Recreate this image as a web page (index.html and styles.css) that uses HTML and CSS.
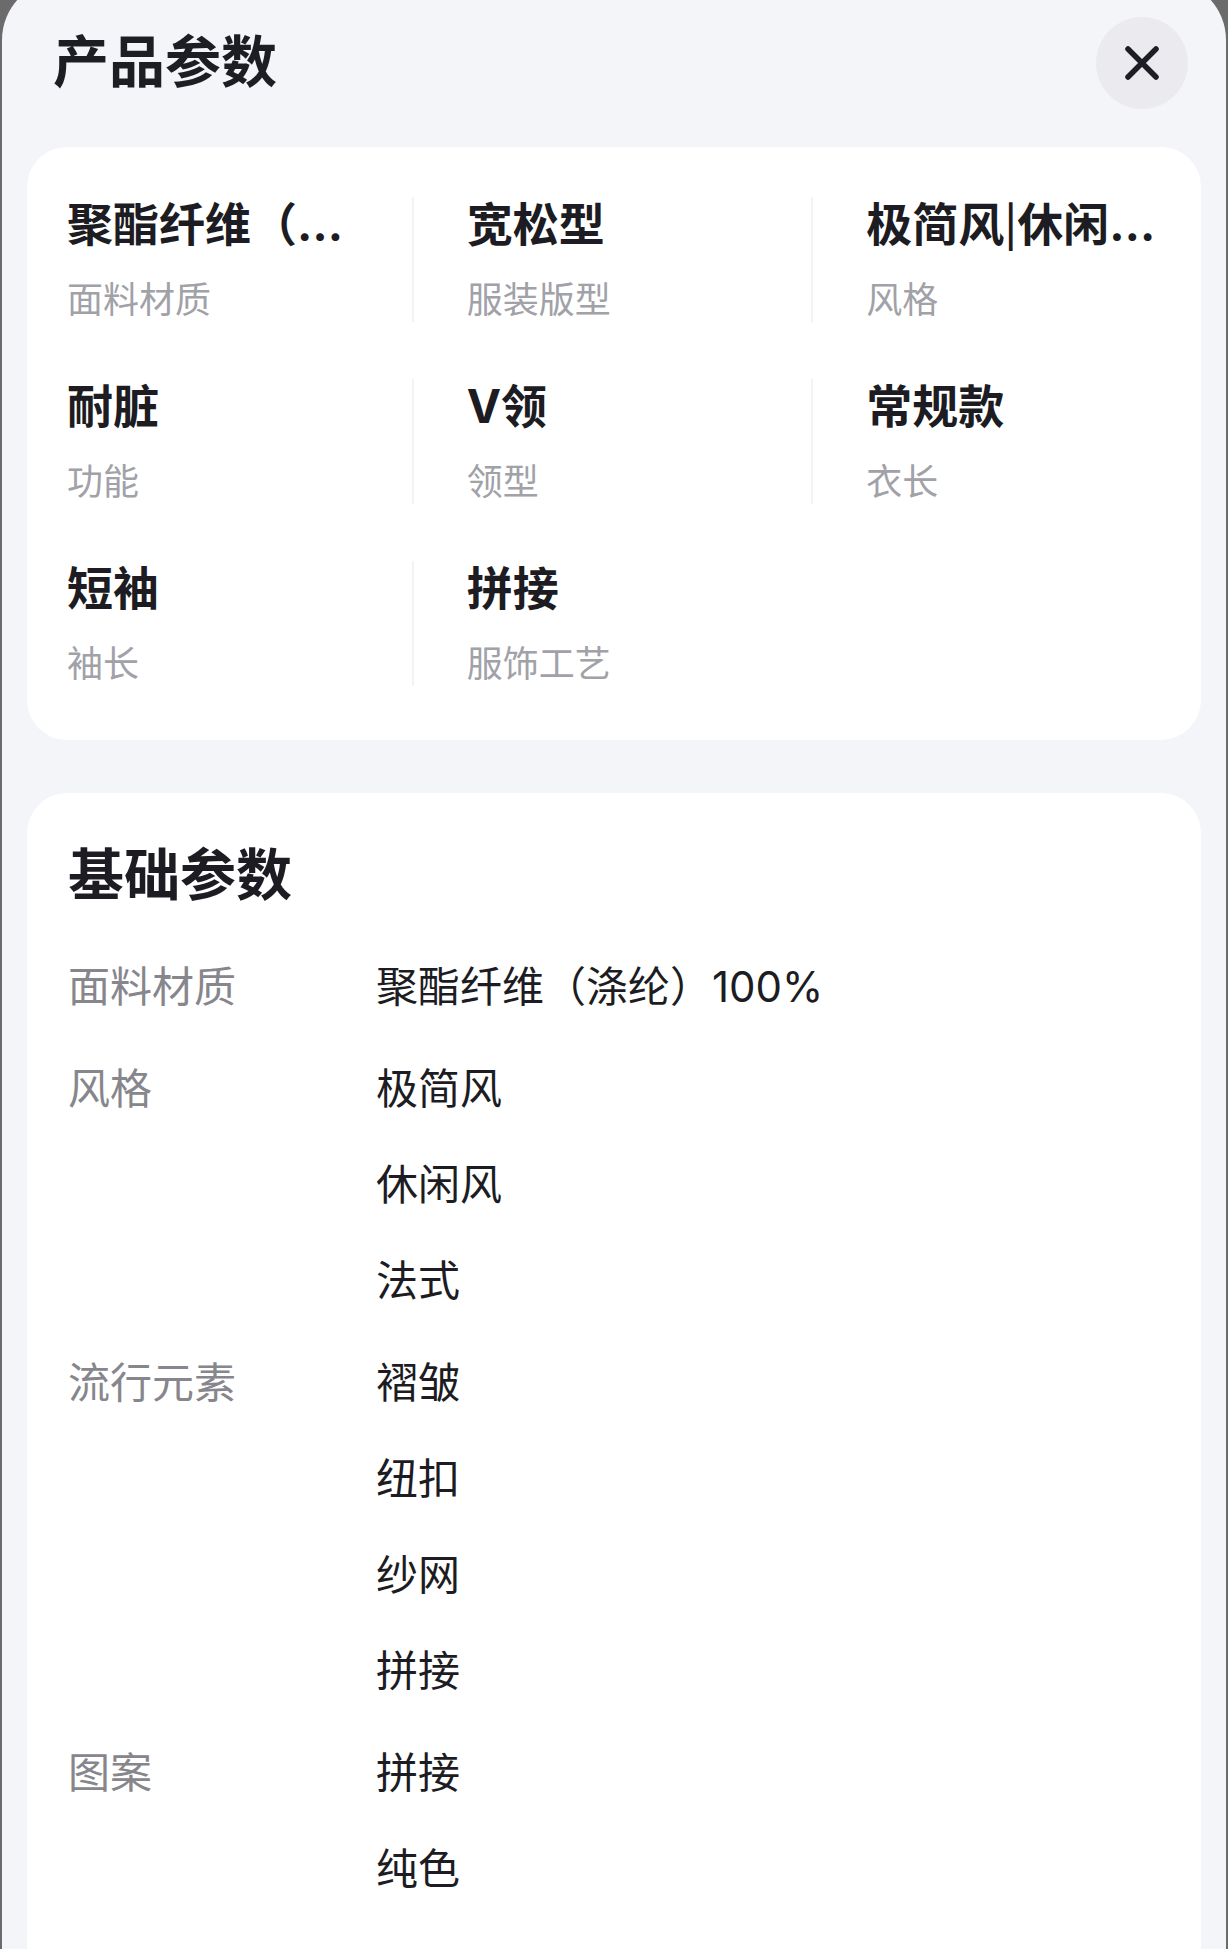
FILE: index.html
```html
<!DOCTYPE html>
<html lang="zh-CN">
<head>
    <meta charset="UTF-8">
    <meta name="viewport" content="width=device-width, initial-scale=1.0">
    <title>产品参数</title>
    <link rel="stylesheet" href="styles.css">
</head>
<body>
    <div class="sheet">
        <div class="sheet-header">
            <h2 class="sheet-title">产品参数</h2>
            <button class="close-btn" type="button" aria-label="关闭">
                <svg width="36" height="36" viewBox="0 0 36 36">
                    <path d="M4 4 L32 32 M32 4 L4 32" stroke="#1d1d26" stroke-width="5.5" stroke-linecap="round" fill="none"/>
                </svg>
            </button>
        </div>

        <!-- 상단 요약 카드 -->
        <div class="summary">
            <div class="summary-grid">
                <div class="attr">
                    <div class="attr-value">聚酯纤维（涤纶）100%</div>
                    <div class="attr-name">面料材质</div>
                </div>
                <div class="attr">
                    <div class="attr-value">宽松型</div>
                    <div class="attr-name">服装版型</div>
                </div>
                <div class="attr">
                    <div class="attr-value">极简风<span class="bar">|</span>休闲风<span class="bar">|</span>法式</div>
                    <div class="attr-name">风格</div>
                </div>
                <div class="attr">
                    <div class="attr-value">耐脏</div>
                    <div class="attr-name">功能</div>
                </div>
                <div class="attr">
                    <div class="attr-value">V领</div>
                    <div class="attr-name">领型</div>
                </div>
                <div class="attr">
                    <div class="attr-value">常规款</div>
                    <div class="attr-name">衣长</div>
                </div>
                <div class="attr">
                    <div class="attr-value">短袖</div>
                    <div class="attr-name">袖长</div>
                </div>
                <div class="attr">
                    <div class="attr-value">拼接</div>
                    <div class="attr-name">服饰工艺</div>
                </div>
            </div>
        </div>

        <!-- 기초 파라미터 -->
        <div class="params">
            <h3 class="params-title">基础参数</h3>
            <div class="param-list">
                <div class="param-row">
                    <div class="param-label">面料材质</div>
                    <div class="param-values">
                        <div>聚酯纤维（涤纶）100%</div>
                    </div>
                </div>
                <div class="param-row">
                    <div class="param-label">风格</div>
                    <div class="param-values">
                        <div>极简风</div>
                        <div>休闲风</div>
                        <div>法式</div>
                    </div>
                </div>
                <div class="param-row">
                    <div class="param-label">流行元素</div>
                    <div class="param-values">
                        <div>褶皱</div>
                        <div>纽扣</div>
                        <div>纱网</div>
                        <div>拼接</div>
                    </div>
                </div>
                <div class="param-row">
                    <div class="param-label">图案</div>
                    <div class="param-values">
                        <div>拼接</div>
                        <div>纯色</div>
                    </div>
                </div>
            </div>
        </div>
    </div>
</body>
</html>
```

FILE: styles.css
```css
body{
    margin: 0;
    background: #6b6b6b;
    font-family: "Inter", "Noto Sans CJK SC", sans-serif;
    color: #1c1c22;
}

.sheet{
    margin: -20px 2px 0;
    padding: 20px 25px 0;
    background: #f4f5f9;
    border-radius: 60px 60px 0 0;
    min-height: 1969px;
    box-sizing: border-box;
}

.sheet-header{
    display: flex;
    justify-content: space-between;
    align-items: flex-start;
    padding: 17px 13px 0 26px;
}

.sheet-title{
    margin: 10px 0 0;
    font-size: 56px;
    line-height: 70px;
    font-weight: 700;
    color: #1d1d24;
}

.close-btn{
    width: 92px;
    height: 92px;
    padding: 0;
    border: 0;
    border-radius: 50%;
    background: #ebebef;
    display: flex;
    justify-content: center;
    align-items: center;
}

/* 요약 카드 */
.summary{
    margin-top: 38px;
    padding: 50px 40px 54px;
    background: #fff;
    border-radius: 40px;
}

.summary-grid{
    display: grid;
    grid-template-columns: repeat(3, 1fr);
    row-gap: 57px;
    margin: 0 -50px 0 -55px;
}

.attr{
    min-width: 0;
    padding: 0 45px 0 55px;
}

.attr:nth-child(3n+2),
.attr:nth-child(3n){
    border-left: 2px solid #f3f3f5;
    padding-left: 53px;
}

.attr-value{
    font-size: 46px;
    line-height: 54px;
    font-weight: 700;
    white-space: nowrap;
    overflow: hidden;
    text-overflow: ellipsis;
}

.attr-value .bar{
    font-family: "Noto Sans CJK SC", sans-serif;
    font-weight: 500;
    line-height: 0;
}

.attr-name{
    margin-top: 27px;
    font-size: 36px;
    line-height: 44px;
    color: #a1a1a8;
}

/* 기초 파라미터 */
.params{
    margin-top: 53px;
    padding: 47px 41px 60px;
    background: #fff;
    border-radius: 40px 40px 0 0;
}

.params-title{
    margin: 0 0 47px;
    font-size: 56px;
    line-height: 70px;
    font-weight: 700;
}

.param-list{
    display: flex;
    flex-direction: column;
    gap: 42px;
}

.param-row{
    display: flex;
    font-size: 42px;
    line-height: 60px;
}

.param-label{
    width: 308px;
    flex-shrink: 0;
    color: #86868c;
}

.param-values{
    display: flex;
    flex-direction: column;
    gap: 36px;
}
```
